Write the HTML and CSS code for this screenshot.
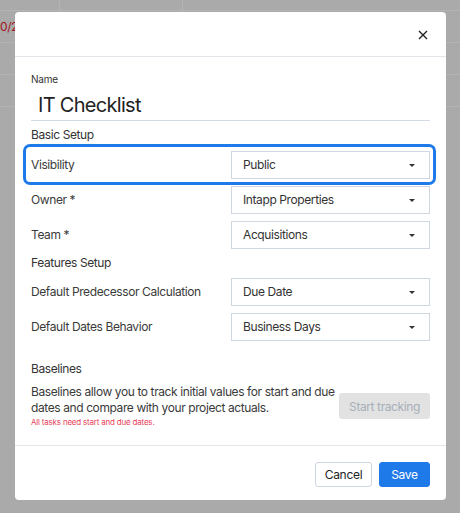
FILE: index.html
```html
<!DOCTYPE html>
<html lang="en">

<head>
    <meta charset="UTF-8" />
    <meta name="viewport" content="width=device-width, initial-scale=1.0" />
    <title>Checklist Settings</title>
    <link rel="stylesheet" href="styles.css">
</head>

<body>
    <!-- page behind the dialog -->
    <div class="backdrop">
        <div class="bg-row"><span class="bg-cell first"></span><span class="bg-cell"></span></div>
        <div class="bg-row"><span class="bg-cell first date">0/20/2023</span><span class="bg-cell"></span></div>
        <div class="bg-row"></div>
        <div class="bg-row"></div>
        <div class="bg-row"></div>
    </div>

    <div class="modal">
        <div class="modal-header">
            <button class="close-btn" aria-label="Close">
                <svg width="10" height="10" viewBox="0 0 10 10">
                    <path d="M1 1L9 9M9 1L1 9" stroke="#222" stroke-width="1.4" fill="none" />
                </svg>
            </button>
        </div>

        <div class="modal-body">
            <div class="name-label">Name</div>
            <div class="name-input">IT Checklist</div>

            <h3 class="section-title">Basic Setup</h3>
            <div class="highlight">
                <div class="field-row">
                    <span class="field-label">Visibility</span>
                    <div class="select">Public<span class="caret"></span></div>
                </div>
            </div>
            <div class="field-row owner">
                <span class="field-label">Owner *</span>
                <div class="select">Intapp Properties<span class="caret"></span></div>
            </div>
            <div class="field-row">
                <span class="field-label">Team *</span>
                <div class="select">Acquisitions<span class="caret"></span></div>
            </div>

            <h3 class="section-title">Features Setup</h3>
            <div class="field-row">
                <span class="field-label">Default Predecessor Calculation</span>
                <div class="select">Due Date<span class="caret"></span></div>
            </div>
            <div class="field-row">
                <span class="field-label">Default Dates Behavior</span>
                <div class="select">Business Days<span class="caret"></span></div>
            </div>

            <h3 class="section-title baselines">Baselines</h3>
            <div class="baseline-row">
                <div class="baseline-text">
                    <p>Baselines allow you to track initial values for start and due dates and compare with your project actuals.</p>
                    <p class="warning">All tasks need start and due dates.</p>
                </div>
                <button class="track-btn" disabled>Start tracking</button>
            </div>
        </div>

        <div class="modal-footer">
            <button class="btn btn-cancel">Cancel</button>
            <button class="btn btn-save">Save</button>
        </div>
    </div>
</body>

</html>
```

FILE: styles.css
```css
/* Reset CSS */
* {
    margin: 0;
    padding: 0;
    box-sizing: border-box;
}

body {
    font-family: Inter, "Noto Sans", sans-serif;
    letter-spacing: -0.4px;
    background-color: #aaaaaa;
    color: #333;
    height: 513px;
    overflow: hidden;
    position: relative;
}

/* page behind the dialog */
.backdrop {
    padding-top: 10px;
}

.bg-row {
    height: 32px;
    border-top: 1px solid #b4b4b4;
    display: flex;
}

.bg-cell {
    display: block;
    height: 100%;
    border-right: 1px solid #b4b4b4;
    width: 123px;
}

.bg-cell.first {
    width: 60px;
}

.bg-row:first-child {
    height: 0;
    border-top: none;
}

.bg-row:first-child .bg-cell {
    height: 10px;
    margin-top: -10px;
}

.date {
    color: #a3141e;
    font-size: 12px;
    line-height: 31px;
    white-space: nowrap;
    overflow: hidden;
}

/* Dialog */
.modal {
    position: absolute;
    left: 15px;
    top: 12px;
    width: 431px;
    height: 488px;
    background-color: #fff;
    border-radius: 4px;
    display: flex;
    flex-direction: column;
}

.modal-header {
    height: 45px;
    border-bottom: 1px solid #e2e5e9;
    display: flex;
    justify-content: flex-end;
    align-items: center;
    padding-right: 16px;
}

.close-btn {
    border: none;
    background: none;
    width: 14px;
    height: 14px;
    display: flex;
    align-items: center;
    justify-content: center;
    margin-top: 2px;
}

.modal-body {
    flex: 1;
    padding: 16px 16px 0;
}

.name-label {
    font-size: 10px;
    line-height: 12px;
    color: #333;
    letter-spacing: -0.2px;
}

.name-input {
    font-size: 20px;
    line-height: 28px;
    padding: 6px 0 1px 7px;
    border-bottom: 1px solid #d3dbe6;
    color: #222;
    letter-spacing: -0.7px;
}

.section-title {
    font-size: 12px;
    font-weight: 400;
    line-height: 16px;
    margin-top: 6px;
    color: #333;
}

.highlight {
    margin: 1px -6px 0 -8px;
    border: 3px solid #1f7ae9;
    border-radius: 7px;
    padding: 4px 3px 3px 5px;
}

.field-row {
    display: flex;
    align-items: center;
    height: 28px;
    margin-top: 7px;
}

.highlight .field-row {
    margin-top: 0;
}

.field-row.owner {
    margin-top: 1px;
}

.field-label {
    flex: 1;
    font-size: 12px;
    color: #3a3a3a;
    margin-top: -1px;
}

.select {
    width: 199px;
    height: 28px;
    border: 1px solid #cfd7e3;
    display: flex;
    align-items: center;
    padding: 0 14px 1px 11px;
    font-size: 12px;
    color: #333;
    position: relative;
}

.caret {
    margin-left: auto;
    margin-top: 1px;
    width: 0;
    height: 0;
    border-left: 3.5px solid transparent;
    border-right: 3.5px solid transparent;
    border-top: 3.5px solid #333;
}

.section-title.baselines {
    margin-top: 20px;
}

.baseline-row {
    display: flex;
    align-items: flex-start;
    margin-top: 7px;
}

.baseline-text {
    flex: 1;
}

.baseline-text p {
    font-size: 12px;
    line-height: 16px;
    color: #3a3a3a;
    max-width: 306px;
}

.baseline-text .warning {
    font-size: 8px;
    line-height: 10px;
    color: #e8435a;
    margin-top: 1px;
    letter-spacing: -0.2px;
}

.track-btn {
    width: 91px;
    height: 26px;
    margin-top: 9px;
    border: none;
    border-radius: 3px;
    background-color: #e2e2e2;
    color: #a7afba;
    font-family: inherit;
    font-size: 12px;
    letter-spacing: -0.4px;
}

.modal-footer {
    height: 55px;
    border-top: 1px solid #e2e5e9;
    display: flex;
    justify-content: flex-end;
    align-items: flex-start;
    gap: 7px;
    padding: 16px 16px 0;
}

.btn {
    height: 25px;
    border-radius: 3px;
    font-family: inherit;
    font-size: 12px;
    letter-spacing: -0.3px;
    cursor: pointer;
}

.btn-cancel {
    width: 57px;
    background-color: #fff;
    border: 1px solid #cdd5e0;
    color: #222;
}

.btn-save {
    width: 51px;
    background-color: #1f7ae9;
    border: 1px solid #1f7ae9;
    color: #fff;
}
```
